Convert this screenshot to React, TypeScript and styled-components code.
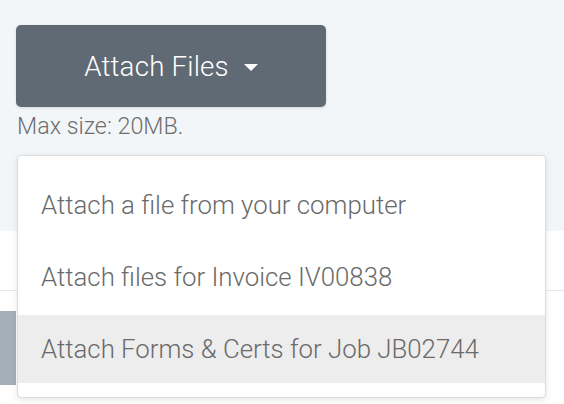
import React from 'react';
import styled, { createGlobalStyle } from 'styled-components';

const GlobalStyle = createGlobalStyle`
  html, body {
    margin: 0;
    padding: 0;
    background: #ffffff;
    font-family: Roboto, "Liberation Sans", Arial, sans-serif;
  }
`;

const Page = styled.div`
  width: 564px;
  height: 404px;
  overflow: hidden;
  background: #ffffff;
`;

const Header = styled.section`
  height: 231px;
  box-sizing: border-box;
  padding: 25px 16px 0;
  background: #f3f6f9;
`;

const AttachWrapper = styled.div`
  position: relative;
  display: inline-block;
`;

const AttachButton = styled.button`
  display: flex;
  align-items: center;
  justify-content: center;
  gap: 15px;
  width: 310px;
  height: 82px;
  padding: 0;
  border: none;
  border-radius: 5px;
  background: #5f6a74;
  color: #ffffff;
  font-family: Roboto, "Liberation Sans", Arial, sans-serif;
  font-size: 27.7px;
  font-weight: 300;
  letter-spacing: 0.2px;
  box-shadow: 0 1px 3px rgba(0, 0, 0, 0.12);
  cursor: pointer;
`;

const Caret = styled.span`
  width: 0;
  height: 0;
  margin-top: 2px;
  border-left: 7px solid transparent;
  border-right: 7px solid transparent;
  border-top: 7px solid #ffffff;
`;

const Hint = styled.div`
  margin: 6px 0 0 1px;
  font-size: 23.3px;
  font-weight: 300;
  color: #6e6e6e;
  line-height: 1.2;
`;

const Menu = styled.ul`
  position: absolute;
  top: 130px;
  left: 1px;
  width: 529px;
  box-sizing: border-box;
  margin: 0;
  padding: 15px 0 14px;
  list-style: none;
  display: flex;
  flex-direction: column;
  gap: 4px;
  background: #ffffff;
  border: 1px solid #dcdcdc;
  border-radius: 4px;
  box-shadow: 0 2px 6px rgba(0, 0, 0, 0.1);
  z-index: 10;
`;

const MenuItem = styled.li<{ $active?: boolean }>`
  box-sizing: border-box;
  height: 68px;
  display: flex;
  align-items: center;
  padding: 0 24px 1px 23px;
  font-size: 25.8px;
  font-weight: 300;
  color: #6a6a6a;
  white-space: nowrap;
  background: ${(p) => (p.$active ? '#ededed' : 'transparent')};
  cursor: pointer;
`;

const Body = styled.section`
  background: #ffffff;
`;

const ToolbarRow = styled.div`
  height: 59px;
  border-bottom: 1px solid #e5e9ed;
`;

const ContentRow = styled.div`
  display: flex;
  padding-top: 20px;
`;

const SideBlock = styled.div`
  width: 16px;
  height: 74px;
  background: #a4afb7;
`;

const items = [
  'Attach a file from your computer',
  'Attach files for Invoice IV00838',
  'Attach Forms & Certs for Job JB02744',
];

export default function App() {
  return (
    <Page>
      <GlobalStyle />
      <Header>
        <AttachWrapper>
          <AttachButton>
            Attach Files
            <Caret />
          </AttachButton>
          <Hint>Max size: 20MB.</Hint>
          <Menu>
            {items.map((label, i) => (
              <MenuItem key={label} $active={i === 2}>
                {label}
              </MenuItem>
            ))}
          </Menu>
        </AttachWrapper>
      </Header>
      <Body>
        <ToolbarRow />
        <ContentRow>
          <SideBlock />
        </ContentRow>
      </Body>
    </Page>
  );
}
